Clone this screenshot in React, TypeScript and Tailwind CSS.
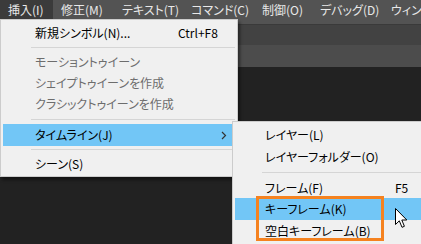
import React from "react"

const font = "font-['Noto_Sans_CJK_JP','Noto_Sans',sans-serif] [font-feature-settings:'palt']"

const menuBar = [
  { label: "挿入(I)", w: "w-[53px]", active: true },
  { label: "修正(M)", w: "w-[61px]" },
  { label: "テキスト(T)", w: "w-[69px]" },
  { label: "コマンド(C)", w: "w-[71px]" },
  { label: "制御(O)", w: "w-[58px]" },
  { label: "デバッグ(D)", w: "w-[71px]" },
  { label: "ウィンドウ(W)", w: "w-[90px]" },
]

// separator: outer box keeps the row height, line sits after the top padding
function Sep({ h, pt, left }: { h: string; pt: string; left: string }) {
  return (
    <div className={`${h} ${pt} ${left}`}>
      <div className="h-px bg-[#d5d5d5]" />
    </div>
  )
}

export default function App() {
  return (
    <div className={`relative w-[421px] h-[244px] overflow-hidden bg-[#222222] text-[12px] ${font}`}>
      {/* Menu bar */}
      <div className="flex h-[24px] bg-[#535353] text-[#e8e8e8] whitespace-nowrap">
        {menuBar.map((m) => (
          <div
            key={m.label}
            className={`${m.w} shrink-0 h-[19px] pl-2 flex items-center ${m.active ? "bg-[#3b3b3b]" : ""}`}
          >
            {m.label}
          </div>
        ))}
      </div>
      <div className="h-px bg-[#3a3a3a]" />
      <div className="h-[20px] bg-[#424242]" />
      <div className="h-[22px] bg-[#4c4c4c]" />

      {/* Insert menu */}
      <div className="absolute left-0 top-[19px] w-[238px] border border-[#cccccc] bg-[#f0f0f0] px-[2px] pt-[2px] pb-px text-[#000] shadow-[2px_3px_3px_rgba(0,0,0,0.45)]">
        <div className="flex items-center h-[22px] pl-[32px]">
          <span className="w-[143px]">新規シンボル(N)...</span>
          <span>Ctrl+F8</span>
        </div>
        <Sep h="h-[7px]" pt="pt-[3px]" left="pl-[28px]" />
        <div className="flex items-center h-[21px] pl-[32px] text-[#6d6d6d]">モーショントゥイーン</div>
        <div className="flex items-center h-[21px] pl-[32px] text-[#6d6d6d]">シェイプトゥイーンを作成</div>
        <div className="flex items-center h-[21px] pl-[32px] text-[#6d6d6d]">クラシックトゥイーンを作成</div>
        <Sep h="h-[10px]" pt="pt-[5px]" left="pl-[28px]" />
        <div className="flex items-center h-[22px] pl-[32px] bg-[#72c6f6]">
          <span>タイムライン(J)</span>
          <svg className="ml-auto mr-[8px]" width="6" height="9" viewBox="0 0 6 9">
            <path d="M1 1l3.5 3.5L1 8" fill="none" stroke="#333" strokeWidth="1.2" />
          </svg>
        </div>
        <Sep h="h-[7px]" pt="pt-[3px]" left="pl-[28px]" />
        <div className="flex items-center h-[22px] pl-[32px]">シーン(S)</div>
      </div>

      {/* Timeline submenu */}
      <div className="absolute left-[232px] top-[121px] w-[200px] h-[140px] border border-[#cccccc] bg-[#f0f0f0] px-[2px] pt-[2px] text-[#000]">
        <div className="flex items-center h-[22px] pl-[30px]">レイヤー(L)</div>
        <div className="flex items-center h-[22px] pl-[30px]">レイヤーフォルダー(O)</div>
        <Sep h="h-[9px]" pt="pt-[4px]" left="pl-[27px]" />
        <div className="flex items-center h-[21px] pl-[30px]">
          <span className="w-[130px]">フレーム(F)</span>
          <span>F5</span>
        </div>
        <div className="flex items-center h-[22px] pl-[30px] bg-[#72c6f6]">キーフレーム(K)</div>
        <div className="flex items-center h-[22px] pl-[30px]">空白キーフレーム(B)</div>

        <div className="absolute left-[23px] top-[74px] w-[128px] h-[45px] border-[3px] border-[#f5821f]" />
      </div>

      {/* Mouse pointer */}
      <svg className="absolute left-[395px] top-[208px]" width="13" height="21" viewBox="0 0 13 21">
        <path
          d="M0.5 0.5 L0.5 16.5 L4.3 12.8 L7 19.3 L9.4 18.3 L6.8 12 L11.8 12 Z"
          fill="#fff"
          stroke="#000"
          strokeWidth="1"
          strokeLinejoin="round"
        />
      </svg>
    </div>
  )
}
